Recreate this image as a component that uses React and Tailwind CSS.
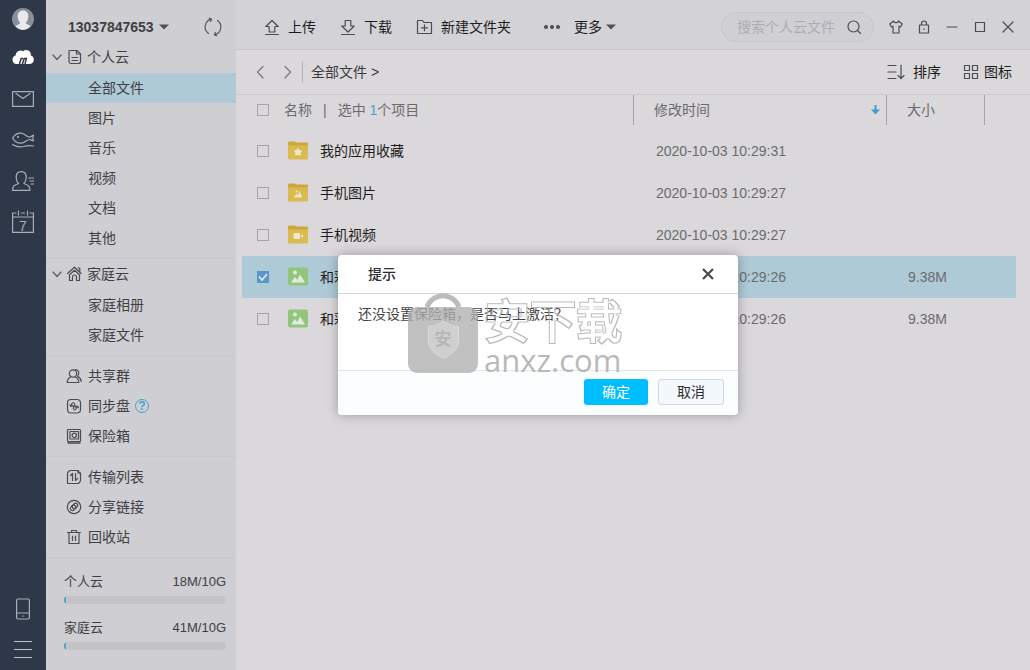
import { useState } from "react"
import clsx from "clsx"

const personalItems = ["全部文件", "图片", "音乐", "视频", "文档", "其他"]
const familyItems = ["家庭相册", "家庭文件"]

const files = [
  { name: "我的应用收藏", time: "2020-10-03 10:29:31", size: "", icon: StarFolder },
  { name: "手机图片", time: "2020-10-03 10:29:27", size: "", icon: PictureFolder },
  { name: "手机视频", time: "2020-10-03 10:29:27", size: "", icon: VideoFolder },
  { name: "和彩云1.jpg", time: "2020-10-03 10:29:26", size: "9.38M", icon: ImageFile },
  { name: "和彩云2.jpg", time: "2020-10-03 10:29:26", size: "9.38M", icon: ImageFile },
]

/* ---------- icons ---------- */

function Icon({ w = 16, h = 16, className, children }) {
  return (
    <svg
      width={w}
      height={h}
      viewBox={`0 0 ${w} ${h}`}
      fill="none"
      stroke="currentColor"
      strokeWidth="1.2"
      strokeLinecap="round"
      strokeLinejoin="round"
      className={clsx("shrink-0", className)}
      aria-hidden="true"
    >
      {children}
    </svg>
  )
}

function Caret() {
  return (
    <svg width="10" height="6" viewBox="0 0 10 6" className="shrink-0" aria-hidden="true">
      <path d="M0 0.5h10L5 5.5z" fill="#4f5053" />
    </svg>
  )
}

function Chevron() {
  return <Icon w={12} h={12} className="text-[#5d5e63]"><path d="M2 4l4 4.5L10 4" /></Icon>
}

function DocIcon() {
  return (
    <Icon className="text-[#4b4c50]">
      <path d="M4 1.5h7l3.500 3.500v7.500a2 2 0 0 1-2 2H5a2 2 0 0 1-2-2v-10a1 1 0 0 1 1-1z" />
      <path d="M10.500 1.500V5h4M6 8.500h5.500M6 11.500h5.500" />
    </Icon>
  )
}

function HomeIcon() {
  return (
    <Icon className="text-[#4b4c50]">
      <path d="M1.500 7.500L8.500 1.200l6.500 6.300M12.200 2h1.600v3.500" />
      <path d="M3.500 14.500V8.800L8.500 4.300l5 4.500v5.700h-3V11a2 2 0 0 0-4 0v3.500z" />
    </Icon>
  )
}

function GroupIcon() {
  return (
    <Icon className="text-[#4b4c50]">
      <circle cx="7" cy="5.500" r="3.700" />
      <path d="M4.700 8.800C2.500 10 1.200 12 1.200 14.500h11.600c0-2.500-1.300-4.500-3.500-5.700M9.500 1.600c3.300-.2 4.500 4.200 2 6.700 2 1 3.500 3 3.800 5.200" />
    </Icon>
  )
}

function SyncIcon() {
  return (
    <Icon className="text-[#4b4c50]">
      <rect x="1.500" y="1.500" width="13" height="13.500" rx="3.500" />
      <path d="M7.500 4.500C6 5 5.300 6 5 7.800M3.800 7l1.200 1.500L6.800 7.500M7.500 8v3M8.500 12c1.500-.5 2.300-1.500 2.500-3.300M12.300 9.500L11 8 9.200 9M8.700 5.500v3" />
    </Icon>
  )
}

function SafeIcon() {
  return (
    <Icon className="text-[#4b4c50]">
      <rect x="1.500" y="1.500" width="13" height="12" rx="1" />
      <path d="M2 15h12" strokeWidth="1.500" />
      <path d="M4 3.500h8.500v7.500H4z" />
      <circle cx="8.300" cy="7.300" r="2.200" />
    </Icon>
  )
}

function TransferIcon() {
  return (
    <Icon className="text-[#4b4c50]">
      <path d="M5 1.500h6.500l3 3V11a3.500 3.500 0 0 1-3.500 3.500H1.500V5A3.500 3.500 0 0 1 5 1.500z" />
      <path d="M12 1.500v2.500h2.500M4.500 6.500l2-2V11.500M9.500 4.500v7l2-2" />
    </Icon>
  )
}

function LinkIcon() {
  return (
    <Icon className="text-[#4b4c50]">
      <circle cx="8" cy="8" r="6.700" />
      <rect x="4" y="6.800" width="6" height="4" rx="2" transform="rotate(-50 7 8.800)" />
      <rect x="6" y="5" width="6" height="4" rx="2" transform="rotate(-50 9 7)" />
    </Icon>
  )
}

function TrashIcon() {
  return (
    <Icon className="text-[#4b4c50]">
      <path d="M1.500 3.500h13M5.500 3.500v-2h5v2M3 3.500v11h10v-11M6.500 7v4.500M9.500 7v4.500" />
    </Icon>
  )
}

function RefreshIcon() {
  return (
    <Icon w={20} h={20} className="text-[#55565a]">
      <path d="M8.500 2.200A8 8 0 0 0 5.500 16.500M14.500 3.500A8 8 0 0 1 11.500 17.800" />
      <path d="M6.300 1.200l2.200 1L7.500 4.500M13.700 18.800l-2.200-1 1-2.300" />
    </Icon>
  )
}

function UploadIcon() {
  return (
    <Icon className="text-[#4b4c50]">
      <path d="M8 1.500L1.800 7.500h3.400v5.500h5.600V7.500h3.400zM1.500 15.500h13" />
    </Icon>
  )
}

function DownloadIcon() {
  return (
    <Icon className="text-[#4b4c50]">
      <path d="M8 13L1.800 7h3.400V1.500h5.600V7h3.400zM1.500 15.500h13" />
    </Icon>
  )
}

function NewFolderIcon() {
  return (
    <Icon w={17} className="text-[#4b4c50]">
      <path d="M1.500 1.500h5l1.500 2h7.500v11h-14zM8.500 5.800v6M5.500 8.800h6" />
    </Icon>
  )
}

function SortIcon() {
  return (
    <Icon w={18} className="text-[#4b4c50]">
      <path d="M1 1.500h8M1 8h8M1 14.500h8M14 1v13.500M11 11.500l3 3 3-3" />
    </Icon>
  )
}

function GridIcon() {
  return (
    <Icon className="text-[#4b4c50]">
      <path d="M1.500 1.500h5v5h-5zM9.500 1.500h5v5h-5zM1.500 9.500h5v5h-5zM9.500 9.500h5v5h-5z" />
    </Icon>
  )
}

function FolderBase({ children }) {
  return (
    <svg width="20" height="19" viewBox="0 0 20 19" className="shrink-0" aria-hidden="true">
      <path d="M0 2a1.500 1.500 0 0 1 1.500-1.500H7L8.500 1.500H19a1 1 0 0 1 1 1v5H0z" fill="#cfa63c" />
      <path d="M0 4.500h20V17a1.500 1.500 0 0 1-1.500 1.500h-17A1.500 1.500 0 0 1 0 17z" fill="#dabb52" />
      <g fill="#efe6cc">{children}</g>
    </svg>
  )
}

function StarFolder() {
  return <FolderBase><path d="M10 7.500l1.300 1.900 2.300.5-1.500 1.800.3 2.400-2.400-.8-2.400.8.300-2.400L6.400 9.900l2.300-.5z" stroke="#efe6cc" strokeLinejoin="round" /></FolderBase>
}

function PictureFolder() {
  return <FolderBase><path d="M6 14.500l2.500-4 1.500 2 1.500-4.500 2.800 6.500z" /><circle cx="8.500" cy="8.500" r="1" /></FolderBase>
}

function VideoFolder() {
  return <FolderBase><rect x="5.500" y="8" width="6.500" height="6" rx="1" /><path d="M12.500 11l2.500-2v4z" /></FolderBase>
}

function ImageFile() {
  return (
    <svg width="20" height="19" viewBox="0 0 20 19" className="shrink-0" aria-hidden="true">
      <rect y="0.500" width="20" height="18" rx="2" fill="#93c47c" />
      <circle cx="7" cy="5.500" r="2" fill="#e3ebe0" />
      <path d="M3 15.500l4-5.500 2.300 3L12 7.500l5 8z" fill="#e3ebe0" />
    </svg>
  )
}

/* ---------- left rail ---------- */

function RailButton({ label, children }) {
  return (
    <button type="button" aria-label={label} className="flex h-[41px] w-full items-center justify-center text-[#a9aeb8]">
      {children}
    </button>
  )
}

function Rail() {
  return (
    <nav className="flex w-[46px] shrink-0 flex-col bg-[#2f3848]">
      <button type="button" aria-label="头像" className="flex h-[37px] items-center justify-center">
        <svg width="22" height="22" viewBox="0 0 22 22" aria-hidden="true">
          <circle cx="11" cy="11" r="11" fill="#8a909b" />
          <path d="M11 2.500c3.500 0 5.300 2.500 5.300 5.700 0 2.800-1 5-2.500 6.600.2 1.700 3 2 4.700 3.200A11 11 0 0 1 11 22a11 11 0 0 1-7.500-4c1.700-1.200 4.500-1.500 4.700-3.200-1.500-1.600-2.500-3.800-2.500-6.600 0-3.200 1.800-5.700 5.300-5.700z" fill="#e9e8ed" />
        </svg>
      </button>
      <RailButton label="云盘">
        <svg width="22" height="18" viewBox="0 0 22 18" aria-hidden="true">
          <path d="M4.500 15A4.300 4.300 0 0 1 3.600 6.600 4.800 4.800 0 0 1 11 2.300a4.600 4.600 0 0 1 7.700 4.300A4.300 4.300 0 0 1 18 15z" fill="#fff" />
          <path d="M9.300 9L7 16.500M9 9.500h2M12.300 9L10 16.500M12 9.500h2.300L13 15" stroke="#2f3848" strokeWidth="1.500" fill="none" />
        </svg>
      </RailButton>
      <RailButton label="邮件">
        <Icon w={22} h={16}><path d="M.6.600h20.800v14.800H.6zM4 2.500l7 5 7-5" /></Icon>
      </RailButton>
      <RailButton label="发现">
        <Icon w={22} h={16}>
          <path d="M.6 6C3 2 6 1 9 1.200c4 .2 5.500 3.800 8.500 4 1.500 0 2.300-1.500 4-2-.7 1.700-.7 4 0 5.800-2-.3-2.500-1.500-4-1.500-2.500 0-4.500 3.700-8.500 3.700C5 11.200 2.500 9.500.6 6zM.6 12.500c5 3 8 2.800 11 2s6-1.200 9.800-.5" />
          <circle cx="6" cy="5" r="0.500" />
        </Icon>
      </RailButton>
      <RailButton label="联系人">
        <Icon w={22} h={20}>
          <path d="M6.500 12.500C2.500 14.200.6 14.500.6 19.300h17.300c0-4.800-2-5.100-6-6.800 1.700-1.500 2.300-3.500 2.300-6C14.200 3 12.300.7 9.200.7S4.200 3 4.200 6.500c0 2.500.6 4.500 2.300 6zM16.500 7h5M18 10h3.500M19 13h2.500" />
        </Icon>
      </RailButton>
      <RailButton label="日历">
        <span className="relative flex">
          <Icon w={22} h={24}><path d="M4 3H.6v19.400h20.800V3H18M9.500 3h3M.6 7h20.800M6.500 1v4M15.500 1v4" /></Icon>
          <span className="absolute inset-x-0 bottom-0 text-center text-[14px] leading-4">7</span>
        </span>
      </RailButton>
      <div className="flex-1" />
      <RailButton label="手机">
        <Icon w={14} h={22}><rect x="0.600" y="1" width="12.800" height="20" rx="1.500" /><path d="M.6 15h12.800M6.800 18h.4" /></Icon>
      </RailButton>
      <RailButton label="菜单">
        <svg width="18" height="17" viewBox="0 0 18 17" fill="#b9bdc5" aria-hidden="true">
          <path d="M0 0h18v1H0zM0 8h18v1H0zM0 16h18v1H0z" />
        </svg>
      </RailButton>
    </nav>
  )
}

/* ---------- sidebar ---------- */

function TreeGroup({ icon: GroupIco, title, items, active, onSelect }) {
  return (
    <div>
      <button type="button" className="flex h-[31px] w-full items-center pb-[2px] pl-[5px]">
        <Chevron />
        <span className="ml-[3px] mr-[5px]"><GroupIco /></span>
        {title}
      </button>
      {items.map((item) => (
        <button
          key={item}
          type="button"
          onClick={() => onSelect(item)}
          className={clsx("flex h-[30px] w-full items-center pl-[42px]", active === item && "bg-[#aecad6]")}
        >
          {item}
        </button>
      ))}
    </div>
  )
}

function SideLink({ icon: LinkIco, label, help }) {
  return (
    <div className="flex h-[30px] items-center pl-5">
      <button type="button" className="flex items-center gap-[6px]">
        <LinkIco />
        {label}
      </button>
      {help && (
        <button type="button" aria-label="帮助" className="ml-[5px] flex h-[14px] w-[14px] items-center justify-center rounded-full border border-[#43a5c9] text-[12px] font-bold leading-3 text-[#43a5c9]">
          ?
        </button>
      )}
    </div>
  )
}

function Quota({ label, value, percent }) {
  return (
    <div>
      <div className="flex h-5 items-center justify-between text-[13px]">
        <span>{label}</span>
        <span>{value}</span>
      </div>
      <div className="mt-1 h-2 overflow-hidden rounded-full bg-[#c4c3c6]">
        <div className="h-full bg-[#43a5c9]" style={{ width: `${percent}%` }} />
      </div>
    </div>
  )
}

function Divider() {
  return <div className="mt-[5px] border-t border-[#c9c8cd]" />
}

function Sidebar() {
  const [active, setActive] = useState("全部文件")

  return (
    <aside className="flex w-[190px] shrink-0 flex-col bg-[#cfced3] text-[#3f4044]">
      <div className="flex h-[42px] items-center justify-between pl-[22px] pr-[13px] pt-3">
        <button type="button" className="flex items-center gap-[5px] font-bold">
          13037847653
          <Caret />
        </button>
        <button type="button" aria-label="刷新"><RefreshIcon /></button>
      </div>
      <TreeGroup icon={DocIcon} title="个人云" items={personalItems} active={active} onSelect={setActive} />
      <Divider />
      <TreeGroup icon={HomeIcon} title="家庭云" items={familyItems} active={active} onSelect={setActive} />
      <Divider />
      <div className="pt-[5px]">
        <SideLink icon={GroupIcon} label="共享群" />
        <SideLink icon={SyncIcon} label="同步盘" help />
        <SideLink icon={SafeIcon} label="保险箱" />
      </div>
      <Divider />
      <div className="pt-[5px]">
        <SideLink icon={TransferIcon} label="传输列表" />
        <SideLink icon={LinkIcon} label="分享链接" />
        <SideLink icon={TrashIcon} label="回收站" />
      </div>
      <Divider />
      <div className="flex flex-col gap-[14px] pl-[18px] pr-[10px] pt-[14px]">
        <Quota label="个人云" value="18M/10G" percent={1} />
        <Quota label="家庭云" value="41M/10G" percent={1} />
      </div>
    </aside>
  )
}

/* ---------- main area ---------- */

function WindowButton({ label, children }) {
  return (
    <button type="button" aria-label={label} className="flex h-7 w-7 items-center justify-center text-[#4b4c50]">
      <Icon w={14} h={14}>{children}</Icon>
    </button>
  )
}

function Toolbar() {
  return (
    <header className="flex h-[50px] shrink-0 items-center border-b border-[#c6c5c9] bg-[#d3d2d7] pl-7 pr-2 pt-1 text-[#1d1d20]">
      <div className="flex items-center gap-6 whitespace-nowrap">
        <button type="button" className="flex items-center gap-2"><UploadIcon />上传</button>
        <button type="button" className="flex items-center gap-2"><DownloadIcon />下载</button>
        <button type="button" className="flex items-center gap-2"><NewFolderIcon />新建文件夹</button>
        <button type="button" className="ml-2 flex items-center">
          <svg width="18" height="6" viewBox="0 0 18 6" fill="#4b4c50" className="mr-[13px]" aria-hidden="true">
            <circle cx="3" cy="3" r="2" /><circle cx="9" cy="3" r="2" /><circle cx="15" cy="3" r="2" />
          </svg>
          更多
          <span className="ml-1"><Caret /></span>
        </button>
      </div>
      <div className="ml-auto flex items-center">
        <div className="mr-2 flex h-[30px] w-[153px] items-center rounded-full border border-[#c7c6cb] bg-[#d0cfd4] pl-[15px] pr-3">
          <input type="text" aria-label="搜索" placeholder="搜索个人云文件" className="w-0 min-w-0 flex-1 bg-transparent outline-none placeholder:text-[#aeadb2]" />
          <button type="button" aria-label="开始搜索" className="ml-1 text-[#4b4c50]">
            <Icon w={14} h={14}><circle cx="6.500" cy="6.500" r="5.500" /><path d="M10.500 10.500l3 3" /></Icon>
          </button>
        </div>
        <WindowButton label="皮肤">
          <path d="M4.500 1L.8 4l1.700 3 1.500-.8V13h6V6.200l1.500.8 1.700-3L9.500 1C9 3.300 5 3.300 4.500 1z" />
        </WindowButton>
        <WindowButton label="锁定">
          <path d="M2.500 5h9v8h-9zM4.500 5V3.500a2.500 2.500 0 0 1 5 0V5M7 8.800v.6" />
        </WindowButton>
        <WindowButton label="最小化"><path d="M2 7h10" /></WindowButton>
        <WindowButton label="最大化"><path d="M2.500 2.500h9v9h-9z" /></WindowButton>
        <WindowButton label="关闭"><path d="M2 2l10 10M12 2L2 12" /></WindowButton>
      </div>
    </header>
  )
}

function PathBar() {
  return (
    <div className="flex h-[45px] shrink-0 items-center border-b border-[#c9c8cb] pl-[17px] pr-[18px]">
      <div className="flex items-center gap-[10px] text-[#77787c]">
        <button type="button" aria-label="后退"><Icon><path d="M10 2.500L4.500 8l5.500 6" /></Icon></button>
        <button type="button" aria-label="前进"><Icon><path d="M6 2.500L11.500 8L6 14" /></Icon></button>
      </div>
      <div className="ml-[7px] h-5 w-px bg-[#b1b0b4]" />
      <a href="#all" className="ml-2 text-[#3a3a3e]">全部文件 &gt;</a>
      <div className="ml-auto flex items-center gap-[22px] text-[#1d1d20]">
        <button type="button" className="flex items-center gap-2"><SortIcon />排序</button>
        <button type="button" className="flex items-center gap-[5px]"><GridIcon />图标</button>
      </div>
    </div>
  )
}

function CheckBox({ label, ...props }) {
  return (
    <span className="relative flex h-3 w-3 shrink-0">
      <input
        type="checkbox"
        aria-label={label}
        className="peer h-3 w-3 appearance-none border border-[#a5a4a8] checked:border-[#5b95c9] checked:bg-[#5b95c9]"
        {...props}
      />
      <svg viewBox="0 0 12 12" className="pointer-events-none absolute inset-0 hidden peer-checked:block" aria-hidden="true">
        <path d="M2 5.500l3 3.500 5-6" fill="none" stroke="#e6edf3" strokeWidth="1.600" />
      </svg>
    </span>
  )
}

function FileTable() {
  const [selected, setSelected] = useState([3])

  const toggle = (i) =>
    setSelected((prev) => (prev.includes(i) ? prev.filter((n) => n !== i) : [...prev, i]))

  return (
    <div className="flex-1 pl-[6px] pr-[14px]">
      <table className="w-full table-fixed border-collapse text-left text-[#6b6b6f]">
        <colgroup>
          <col />
          <col className="w-[253px]" />
          <col className="w-[99px]" />
          <col className="w-[31px]" />
        </colgroup>
        <thead>
          <tr className="h-[35px] align-top">
            <th className="p-0 font-normal">
              <div className="flex h-[30px] items-center pl-[15px]">
                <CheckBox label="全选" />
                <span className="ml-[15px]">名称</span>
                <span className="mx-[11px]">|</span>
                <span>选中 <span className="text-[#43a5c9]">{selected.length}</span>个项目</span>
              </div>
            </th>
            <th className="p-0 font-normal">
              <div className="flex h-[30px] items-center justify-between border-l border-[#a5a4a8] pl-5 pr-[6px]">
                修改时间
                <svg width="9" height="10" viewBox="0 0 9 10" fill="#3ba3cb" aria-hidden="true">
                  <path d="M3.500 0h2v4.500H9L4.500 9.500 0 4.500h3.500z" />
                </svg>
              </div>
            </th>
            <th className="p-0 font-normal">
              <div className="flex h-[30px] items-center border-x border-[#a5a4a8] pl-5">大小</div>
            </th>
            <th className="p-0" />
          </tr>
        </thead>
        <tbody>
          {files.map((file, i) => (
            <tr key={file.name} className={clsx("h-[42px]", selected.includes(i) && "bg-[#aecad6]")}>
              <td className="p-0">
                <div className="flex items-center pl-[15px] text-[#1d1d20]">
                  <CheckBox label={file.name} checked={selected.includes(i)} onChange={() => toggle(i)} />
                  <span className="ml-[19px] mr-3 pb-[2px]"><file.icon /></span>
                  <span className="truncate">{file.name}</span>
                </div>
              </td>
              <td className="p-0 pl-[23px]">{file.time}</td>
              <td className="p-0 pl-[22px]">{file.size}</td>
              <td className="p-0" />
            </tr>
          ))}
        </tbody>
      </table>
    </div>
  )
}

/* ---------- overlay ---------- */

function TipDialog() {
  return (
    <div className="absolute inset-0 flex items-center justify-center">
      <div role="dialog" aria-labelledby="tip-title" className="w-[400px] overflow-hidden rounded-[4px] bg-white text-[#2d2d30] shadow-[0_0_12px_rgba(0,0,0,0.3)]">
        <div className="flex h-[39px] items-center justify-between border-b border-[#d3d6d9] pl-[30px] pr-[23px]">
          <h2 id="tip-title" className="font-medium">提示</h2>
          <button type="button" aria-label="关闭" className="text-[#4a4a4d]">
            <svg width="14" height="14" viewBox="0 0 14 14" fill="none" stroke="currentColor" strokeWidth="2.200" aria-hidden="true">
              <path d="M2 2l10 10M12 2L2 12" />
            </svg>
          </button>
        </div>
        <p className="h-[76px] px-5 pt-[10px] text-[#444446]">还没设置保险箱，是否马上激活？</p>
        <div className="flex h-[45px] items-center justify-end gap-[10px] border-t border-[#e2e5e8] bg-[#fbfeff] pb-[2px] pr-[14px]">
          <button type="button" className="h-[26px] w-16 rounded-[3px] bg-[#00bfff] text-white">确定</button>
          <button type="button" className="h-[26px] w-[66px] rounded-[3px] border border-[#d0d7e0] bg-[#f3f8fd]">取消</button>
        </div>
      </div>
    </div>
  )
}

function Watermark() {
  return (
    <div className="pointer-events-none absolute inset-0 flex items-center justify-center pb-1">
      {/* hollow lettering: the fattened glyphs minus their own eroded shape */}
      <svg width="0" height="0" className="absolute" aria-hidden="true">
        <filter id="hollow" x="-5%" y="-10%" width="110%" height="120%">
          <feMorphology in="SourceAlpha" operator="erode" radius="1" result="inner" />
          <feComposite in="SourceGraphic" in2="inner" operator="out" />
        </filter>
      </svg>
      <div className="flex items-end gap-[6px]">
        <div className="relative">
          <svg width="70" height="80" viewBox="0 0 70 80" aria-hidden="true">
            <path d="M19 14a17 17 0 0 1 32 0" fill="none" stroke="#bcbcbc" strokeWidth="5" />
            <rect y="14" width="70" height="66" rx="9" fill="#b0b0b0" opacity="0.780" />
            <path d="M35.500 28c4 3.500 9 5 15 5.500V48c0 8-6 13-15 17.500C26.500 61 20.500 56 20.500 48V33.500c6-.5 11-2 15-5.500z" fill="#cfcfcf" stroke="#d9d9d9" />
          </svg>
          <span className="absolute inset-x-0 top-[37px] text-center text-[17px] font-bold leading-5 text-[#b7b7b7]">安</span>
        </div>
        <div className="flex flex-col text-[#b9b9b9]">
          <span className="text-[46px] leading-[50px] [-webkit-text-stroke:3px_#b9b9b9] [filter:url(#hollow)]">安下载</span>
          <span className="font-['Open_Sans'] text-[31px] leading-[26px] font-medium">anxz.com</span>
        </div>
      </div>
    </div>
  )
}

export default function App() {
  return (
    <div className="relative flex min-h-screen font-['Liberation_Sans','Noto_Sans_CJK_SC',sans-serif] text-[14px] leading-5">
      <Rail />
      <div className="relative flex min-w-0 flex-1">
        <Sidebar />
        <main className="flex min-w-0 flex-1 flex-col bg-[#dad8db]">
          <Toolbar />
          <PathBar />
          <FileTable />
        </main>
        <TipDialog />
      </div>
      <Watermark />
    </div>
  )
}
